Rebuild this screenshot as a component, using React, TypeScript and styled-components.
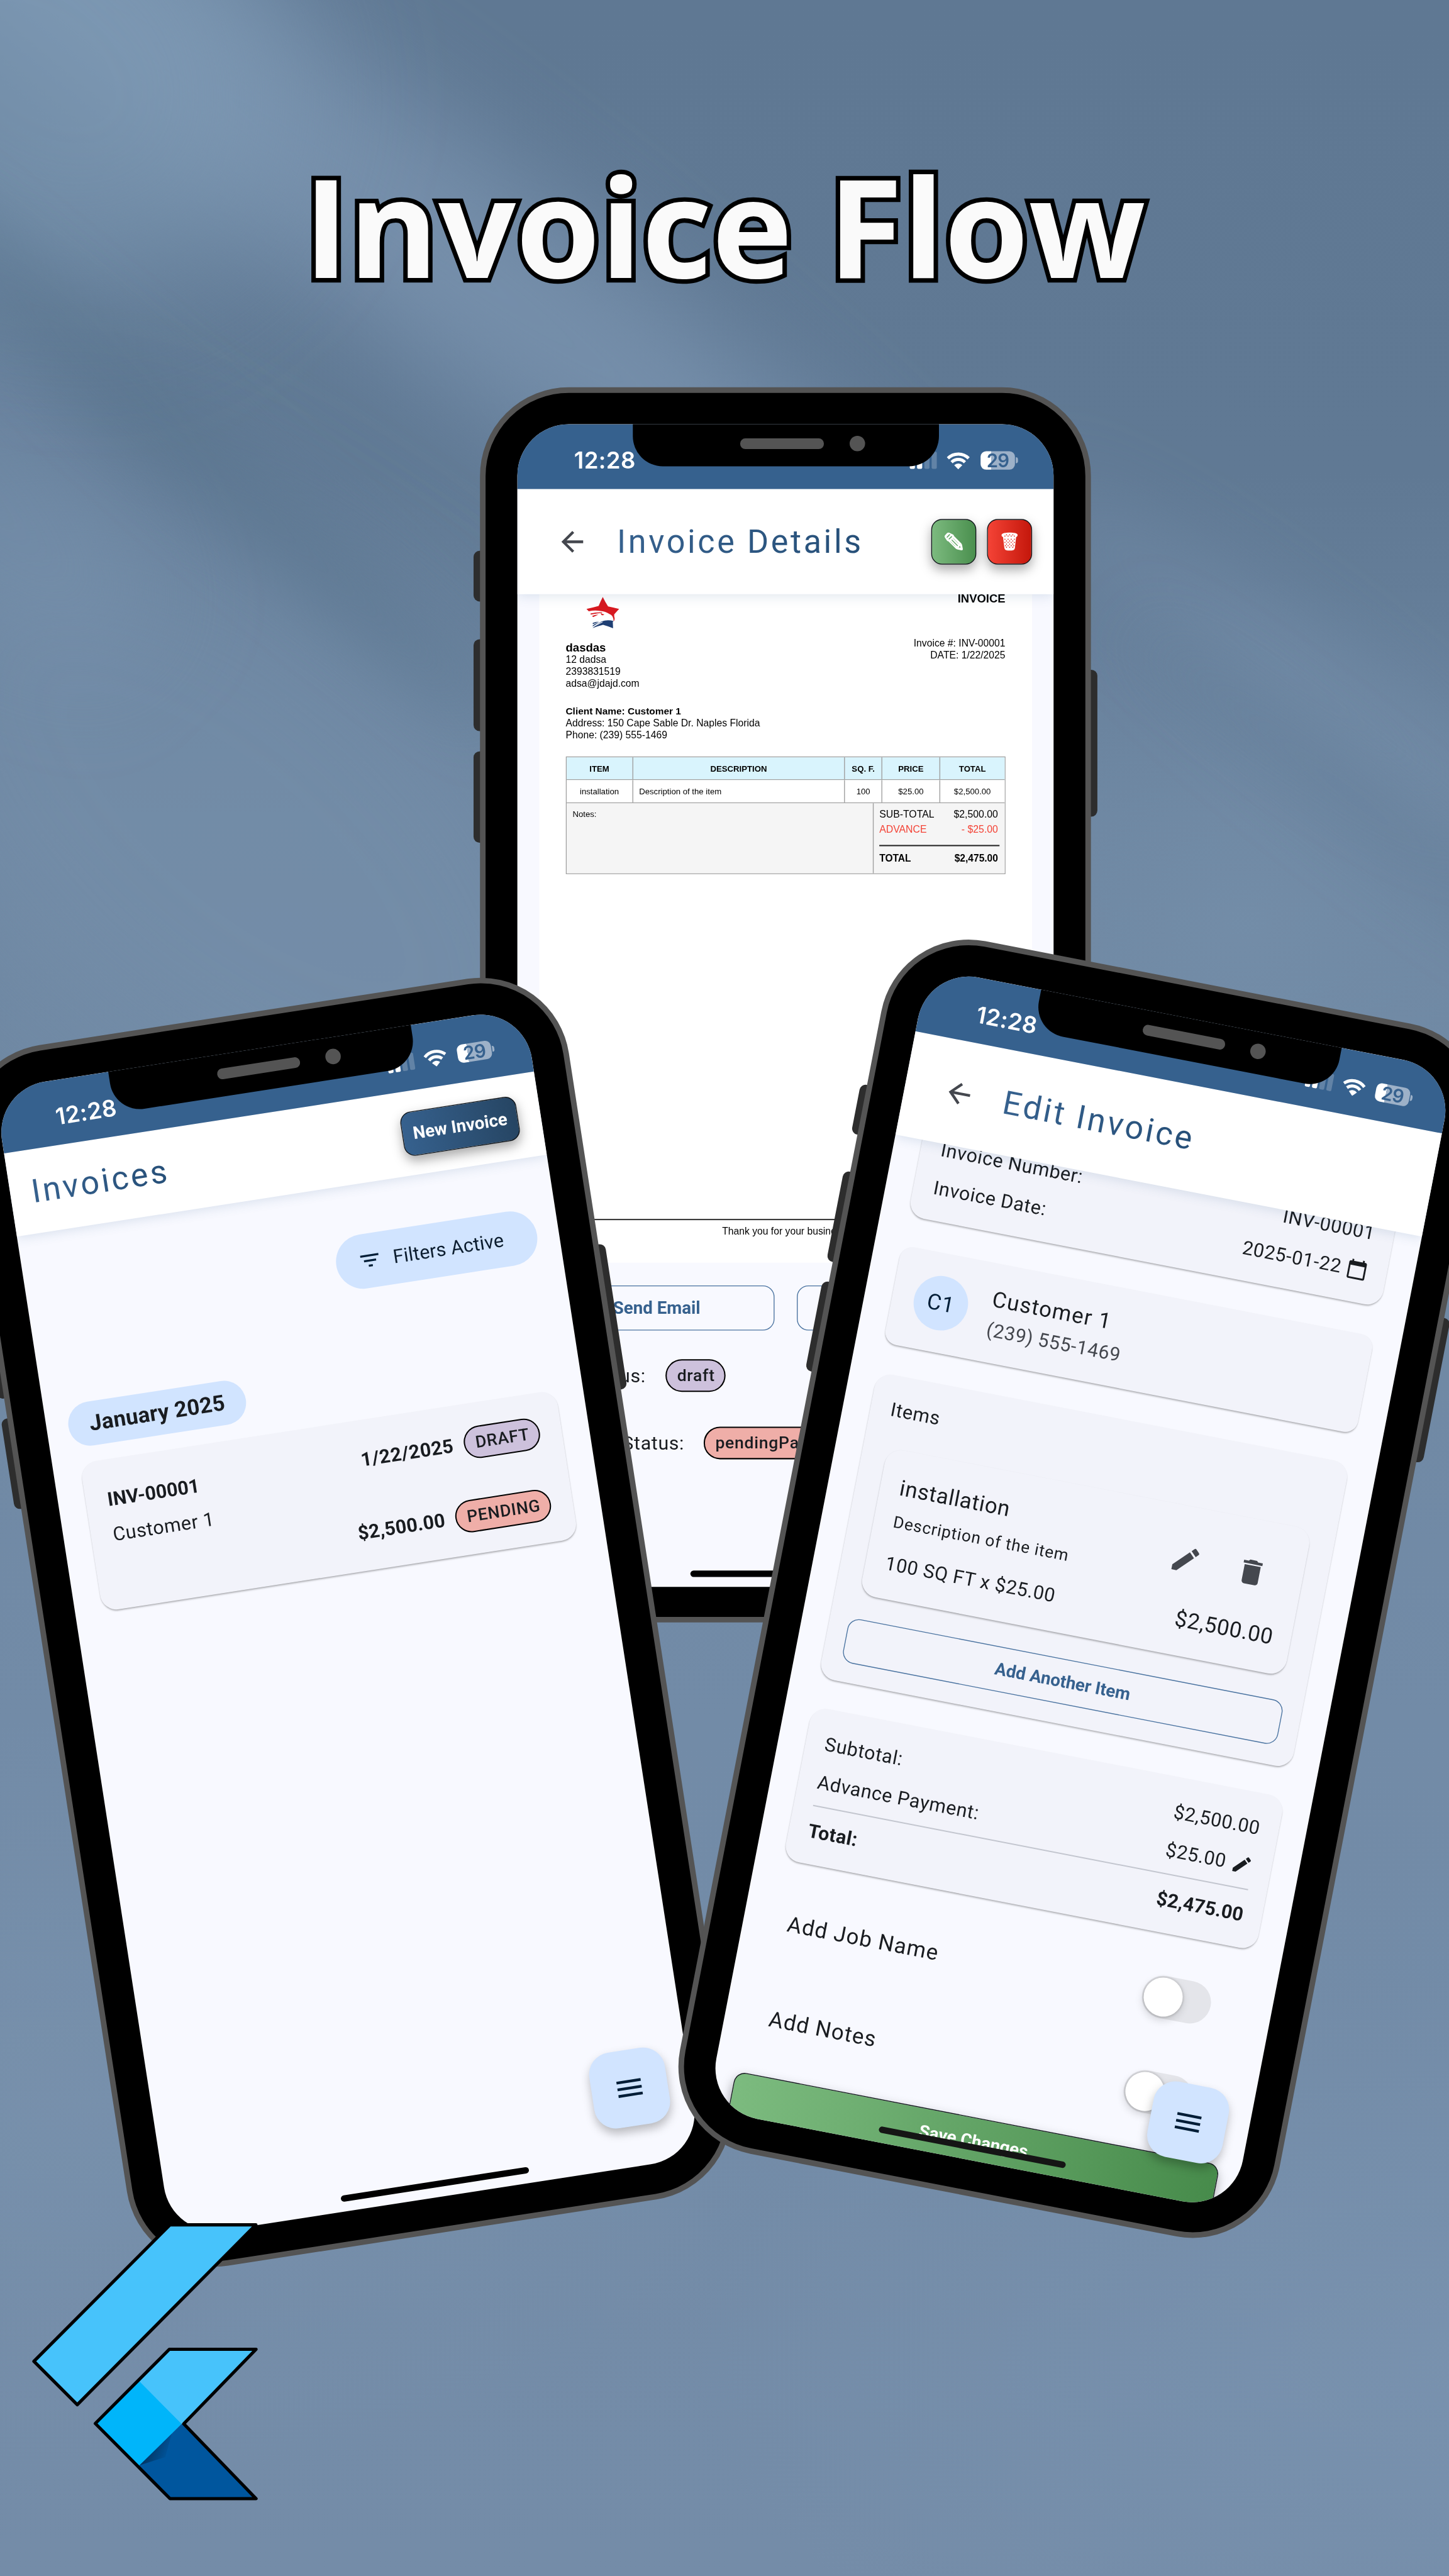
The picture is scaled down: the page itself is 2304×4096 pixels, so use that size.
import React from "react";
import styled, { createGlobalStyle, css } from "styled-components";

const GlobalStyle = createGlobalStyle`
  * { box-sizing: border-box; }
  html, body { margin: 0; padding: 0; background: #6f89a4; }
`;

const blue = "#36618e";
const ink = "#191c20";
const muted = "#44474e";
const roboto = `Roboto, "Noto Sans", sans-serif`;
const arial = `"Liberation Sans", Arial, sans-serif`;

/* ---------- poster ---------- */

const Viewport = styled.main`
  width: 2304px;
  height: 4096px;
  overflow: hidden;
  position: relative;
`;

const Poster = styled.div`
  position: relative;
  width: 3375px;
  height: 6000px;
  overflow: hidden;
  transform: scale(0.6826667);
  transform-origin: 0 0;
  background:
    radial-gradient(ellipse 1900px 900px at 3500px 5500px, rgba(124, 150, 179, 0.6), transparent),
    radial-gradient(ellipse 1600px 900px at 200px 4900px, rgba(122, 147, 174, 0.6), transparent),
    radial-gradient(ellipse 900px 800px at 2900px 2150px, rgba(119, 145, 172, 0.6), transparent),
    linear-gradient(180deg, #5f7893 0, #607994 1100px, #6b849f 1900px, #6e87a2 2400px, #728ba7 4000px, #748ca8 6000px);
`;

const Beam = styled.div<{ $x: number; $y: number; $w: number; $h: number; $angle: number; $color: string; $blur: number }>`
  position: absolute;
  left: ${(p) => p.$x}px;
  top: ${(p) => p.$y}px;
  width: ${(p) => p.$w}px;
  height: ${(p) => p.$h}px;
  background: ${(p) => p.$color};
  border-radius: 50%;
  filter: blur(${(p) => p.$blur}px);
  transform: rotate(${(p) => p.$angle}deg);
`;

const Headline = styled.h1`
  position: relative;
  margin: 0;
  padding-top: 308px;
  text-align: center;
  font: 700 317.5px/433px "Open Sans", "Noto Sans", sans-serif;
  color: #fafafa;
  white-space: nowrap;
  -webkit-text-stroke: 21px #000;
  paint-order: stroke fill;
`;

const FlutterMark = styled.svg`
  position: absolute;
  left: 60px;
  top: 5160px;
  width: 560px;
  height: 680px;
`;

/* ---------- phone ---------- */

const PhoneBody = styled.section<{ $cx: number; $cy: number; $angle: number }>`
  position: absolute;
  left: ${(p) => p.$cx - 711.5}px;
  top: ${(p) => p.$cy - 1440}px;
  width: 1423px;
  height: 2877px;
  transform: rotate(${(p) => p.$angle}deg);
  transform-origin: 711.5px 1440px;
`;

const SideKey = styled.div<{ $side: "left" | "right"; $top: number; $length: number }>`
  position: absolute;
  ${(p) => p.$side}: -15px;
  top: ${(p) => p.$top}px;
  width: 40px;
  height: ${(p) => p.$length}px;
  border-radius: 14px;
  background: #2d2d2d;
`;

const Shell = styled.div`
  position: relative;
  width: 100%;
  height: 100%;
  border: 13px solid #545454;
  border-radius: 207px;
  background: #000;
  padding: 73px 74px 70px;
`;

const Screen = styled.div`
  position: relative;
  width: 1249px;
  height: 2708px;
  border-radius: 120px;
  overflow: hidden;
  background: #f8f9ff;
  display: flex;
  flex-direction: column;
  font-family: ${roboto};
  color: ${ink};
  white-space: nowrap;
`;

const Notch = styled.div`
  position: absolute;
  z-index: 5;
  left: 269px;
  top: -2px;
  width: 713px;
  height: 100px;
  border-radius: 0 0 70px 70px;
  background: #000;
  display: flex;
  align-items: center;
  padding: 0 0 6px 250px;
  gap: 60px;
`;

const Speaker = styled.div`
  width: 195px;
  height: 25px;
  border-radius: 12px;
  background: #545454;
`;

const Camera = styled.div`
  width: 36px;
  height: 36px;
  border-radius: 50%;
  background: #545454;
`;

const HomeBar = styled.div<{ $color?: string }>`
  position: absolute;
  z-index: 6;
  left: 403px;
  bottom: 23px;
  width: 443px;
  height: 15px;
  border-radius: 8px;
  background: ${(p) => p.$color ?? "#000"};
`;

const StatusBar = styled.div`
  position: relative;
  z-index: 4;
  flex: none;
  height: 151px;
  padding: 17px 83px 0 132px;
  background: ${blue};
  display: flex;
  align-items: center;
  color: #fff;
`;

const Clock = styled.span`
  flex: 1;
  padding-top: 2px;
  font: 600 53.5px/60px Inter, sans-serif;
  letter-spacing: 0.6px;
`;

const Signal = styled.div`
  display: flex;
  align-items: flex-end;
  gap: 5px;
  height: 40px;
  margin-right: 23px;
`;

const SignalStep = styled.i<{ $h: number; $dim?: boolean }>`
  width: 12px;
  height: ${(p) => p.$h}px;
  border-radius: 3px;
  background: ${(p) => (p.$dim ? "rgba(255,255,255,0.22)" : "#fff")};
`;

const WifiGlyph = styled.svg`
  width: 54px;
  height: 41px;
  margin-right: 25px;
`;

const BatteryRow = styled.div`
  display: flex;
  align-items: center;
  gap: 2px;
`;

const Battery = styled.div`
  width: 80px;
  height: 43px;
  border-radius: 13px;
  background: linear-gradient(90deg, #fff 0 24px, #9db1c8 24px);
  color: ${blue};
  font: 600 43px/43px Inter, sans-serif;
  letter-spacing: -1px;
  text-align: center;
`;

const BatteryTip = styled.i`
  width: 5px;
  height: 14px;
  border-radius: 0 5px 5px 0;
  background: #9db1c8;
`;

const AppBar = styled.header<{ $height: number; $left: number }>`
  position: relative;
  z-index: 3;
  flex: none;
  height: ${(p) => p.$height}px;
  padding: 0 50px 0 ${(p) => p.$left}px;
  background: #fff;
  box-shadow: 0 4px 26px rgba(54, 97, 142, 0.16);
  display: flex;
  align-items: center;
`;

const BarTitle = styled.h2<{ $gap?: number }>`
  margin: 0 auto 0 ${(p) => p.$gap ?? 0}px;
  font-weight: 400;
  font-size: 76.3px;
  line-height: 100px;
  letter-spacing: 5.3px;
  background: linear-gradient(90deg, ${blue}, #264f78);
  background-clip: text;
  -webkit-background-clip: text;
  color: transparent;
`;

const Icon24 = styled.svg<{ $size: number; $color?: string }>`
  flex: none;
  width: ${(p) => p.$size}px;
  height: ${(p) => p.$size}px;
  fill: ${(p) => p.$color ?? ink};
`;

const raised = css`
  border: 2.5px solid #10151a;
  box-shadow: 0 12px 26px rgba(0, 0, 0, 0.34);
`;

const SquareAction = styled.div<{ $tone: string }>`
  ${raised}
  width: 105px;
  height: 106px;
  margin-left: 25px;
  border-radius: 25px;
  background: linear-gradient(90deg, ${(p) => p.$tone});
  display: flex;
  align-items: center;
  justify-content: center;
`;

const Fab = styled.div`
  position: absolute;
  z-index: 4;
  right: 53px;
  bottom: 94px;
  width: 178px;
  height: 178px;
  border-radius: 51px;
  background: #d1e4ff;
  box-shadow: 0 12px 22px rgba(0, 0, 0, 0.26);
  display: flex;
  align-items: center;
  justify-content: center;
`;

const Card = styled.div<{ $radius?: number }>`
  flex: none;
  background: #f2f3fa;
  border-radius: ${(p) => p.$radius ?? 38}px;
  box-shadow: 0 4px 4px -1px rgba(0, 0, 0, 0.25), 0 1px 3px rgba(0, 0, 0, 0.1);
`;

const Line = styled.div<{ $size?: number; $lh?: number; $track?: number; $bold?: boolean; $color?: string; $mt?: number }>`
  font-size: ${(p) => p.$size ?? 44.5}px;
  line-height: ${(p) => p.$lh ?? 64}px;
  letter-spacing: ${(p) => p.$track ?? 0.95}px;
  font-weight: ${(p) => (p.$bold ? 700 : 400)};
  color: ${(p) => p.$color ?? ink};
  margin-top: ${(p) => p.$mt ?? 0}px;
`;

const Badge = styled.span<{ $tone: "violet" | "coral" }>`
  height: 76px;
  padding: 0 22px 0 24px;
  border: 3.2px solid #000;
  border-radius: 38px;
  background: ${(p) => (p.$tone === "violet" ? "#cdc1dc" : "#efaea8")};
  font-weight: 500;
  font-size: 38.9px;
  line-height: 70px;
  letter-spacing: 1.1px;
`;

const Outlined = styled.div<{ $bleed?: boolean }>`
  flex: 1;
  height: 105px;
  margin: 0 ${(p) => (p.$bleed ? -2.5 : 0)}px;
  border: 2px solid #4a73a0;
  border-radius: 27px;
  color: ${blue};
  font-weight: 700;
  font-size: 40.5px;
  line-height: 101px;
  text-align: center;
`;

/* ---------- invoice details ---------- */

const Paper = styled.article`
  flex: none;
  height: 1556.5px;
  margin: 0 50.5px;
  padding: 0 62px 58px;
  background: #fff;
  display: flex;
  flex-direction: column;
  font-family: ${arial};
  font-size: 23px;
  line-height: 27.2px;
  color: #000;
`;

const Split = styled.div<{ $height?: number }>`
  display: flex;
  justify-content: space-between;
  align-items: flex-start;
  ${(p) => p.$height && `height: ${p.$height}px;`}
`;

const EagleStar = styled.svg`
  width: 130px;
  height: 86px;
  margin-left: 22px;
`;

const PaperTitle = styled.strong`
  font-size: 27px;
  line-height: 30px;
  margin-top: -4px;
`;

const Company = styled.div`
  padding-top: 8px;
  strong { display: block; font-size: 27.2px; line-height: 31px; }
`;

const RightLines = styled.div`
  padding-top: 1px;
  text-align: right;
`;

const Client = styled.div`
  strong { font-size: 22.6px; }
`;

const PaperTable = styled.div`
  margin-top: 37px;
  border: 2.5px solid #9e9e9e;
  font-size: 19.3px;
`;

const TableRow = styled.div<{ $head?: boolean }>`
  display: grid;
  grid-template-columns: 153px 493.6px 87.1px 134.9px 1fr;
  height: 53.3px;
  border-bottom: 2.5px solid #9e9e9e;
  background: ${(p) => (p.$head ? "#d9f4fd" : "#fff")};
  font-weight: ${(p) => (p.$head ? 700 : 400)};
`;

const Cell = styled.div<{ $start?: boolean }>`
  display: flex;
  align-items: center;
  justify-content: ${(p) => (p.$start ? "flex-start" : "center")};
  padding: ${(p) => (p.$start ? "1px 0 0 14px" : "1px 0 0")};
  & + & { border-left: 2.5px solid #9e9e9e; }
`;

const TotalsRow = styled.div`
  display: grid;
  grid-template-columns: 713.5px 1fr;
  height: 163px;
  background: #f5f5f5;
`;

const NotesCell = styled.div`
  padding: 12px 14px;
`;

const SumCell = styled.div`
  border-left: 2.5px solid #9e9e9e;
  padding: 12px 12px 0 13px;
  font-size: 23.2px;
  line-height: 29px;
`;

const SumLine = styled.div<{ $red?: boolean; $total?: boolean }>`
  display: flex;
  justify-content: space-between;
  padding-right: 3px;
  height: 35px;
  color: ${(p) => (p.$red ? "#f44336" : "#000")};
  ${(p) => p.$total && "border-top: 3px solid #222; margin-top: 15px; padding-top: 14px; font-weight: 700; font-size: 22.8px; height: auto;"}
`;

const PaperFooter = styled.footer`
  margin-top: auto;
  border-top: 3px solid #333;
  padding-top: 13px;
  text-align: center;
`;

const ButtonPair = styled.div`
  flex: none;
  display: flex;
  gap: 52px;
  margin: 53px 50.5px 0;
`;

const StatusRow = styled.div<{ $mt: number }>`
  flex: none;
  display: flex;
  align-items: center;
  gap: 46px;
  margin: ${(p) => p.$mt}px 0 0 51px;
`;

const StatusName = styled(Line)<{ $width: number }>`
  width: ${(p) => p.$width}px;
  text-align: right;
`;

/* ---------- invoice list ---------- */

const NewInvoice = styled.div`
  ${raised}
  width: 273px;
  height: 104px;
  margin: 4px 3px 0 0;
  border-radius: 26px;
  background: linear-gradient(90deg, ${blue}, #264563);
  color: #fff;
  font-weight: 700;
  font-size: 40.5px;
  line-height: 98px;
  text-align: center;
`;

const FilterChip = styled.div`
  flex: none;
  align-self: flex-end;
  margin: 117px 51px 0 0;
  width: 473px;
  height: 127px;
  border-radius: 64px;
  background: #d1e4ff;
  display: flex;
  align-items: center;
  gap: 26px;
  padding-left: 51px;
`;

const MonthChip = styled.div`
  flex: none;
  align-self: flex-start;
  margin: 161px 0 0 51px;
  width: 418px;
  height: 103px;
  border-radius: 52px;
  background: #d1e4ff;
  font-weight: 700;
  font-size: 50.9px;
  line-height: 102px;
  letter-spacing: 0.4px;
  text-align: center;
`;

const InvoiceCard = styled(Card)`
  margin: 37px 64px 0;
  height: 349px;
  padding: 54px 51px 0;
  display: flex;
  justify-content: space-between;
`;

const Amounts = styled.div`
  display: flex;
  flex-direction: column;
  align-items: flex-end;
  gap: 91.5px;
`;

const AmountRow = styled.div`
  display: flex;
  align-items: center;
  gap: 25px;
`;

/* ---------- edit invoice ---------- */

const EditBody = styled.div`
  flex: none;
  display: flex;
  flex-direction: column;
  padding: 0 64px;
  margin-top: -82px;
`;

const MetaCard = styled(Card)`
  height: 262px;
  padding: 51px 45px 0 47px;
`;

const Field = styled.div<{ $height: number }>`
  display: flex;
  justify-content: space-between;
  align-items: center;
  height: ${(p) => p.$height}px;
`;

const Value = styled.div`
  display: flex;
  align-items: center;
  gap: 12px;
`;

const CustomerCard = styled(Card)`
  margin-top: 70px;
  height: 231px;
  padding-left: 51px;
  display: flex;
  align-items: center;
  gap: 53px;
`;

const Avatar = styled.div`
  width: 127px;
  height: 127px;
  border-radius: 50%;
  background: #d1e4ff;
  color: #001d36;
  font-size: 50.9px;
  line-height: 127px;
  letter-spacing: 1px;
  text-align: center;
`;

const ItemsCard = styled(Card)`
  margin-top: 70px;
  height: 724px;
  padding: 47px 47px 0;
`;

const ItemCard = styled(Card)`
  margin: 57px 10px;
  height: 348px;
  padding: 48px 42px 0 46px;
  display: flex;
  justify-content: space-between;
`;

const ItemSide = styled.div`
  display: flex;
  flex-direction: column;
  align-items: flex-end;
`;

const ItemIcons = styled.div`
  display: flex;
  gap: 80px;
  height: 152px;
  align-items: center;
  padding-right: 40px;
`;

const SumCard = styled(Card)`
  margin-top: 69px;
  height: 363px;
  padding: 49px 44px 0 45px;
`;

const Divider = styled.div`
  height: 3px;
  margin: 22px 0 13px;
  background: #c3c6cf;
`;

const ToggleList = styled.div`
  padding: 34px 78px 0 39px;
`;

const ToggleRow = styled.div`
  display: flex;
  align-items: center;
  justify-content: space-between;
  height: 224.6px;
`;

const Switch = styled.div`
  width: 162px;
  height: 99px;
  border-radius: 50px;
  background: #e4e5ea;
  padding: 4px;
`;

const Thumb = styled.div`
  width: 91px;
  height: 91px;
  border-radius: 50%;
  background: #fff;
  box-shadow: 0 8px 20px rgba(0, 0, 0, 0.16), 0 0 4px 3px rgba(0, 0, 0, 0.1);
`;

const SaveButton = styled.div`
  ${raised}
  height: 160px;
  margin: 22px -14px 0;
  border-radius: 26px;
  background: linear-gradient(90deg, #7cbb7f, #478b4b);
  color: #fff;
  font-weight: 700;
  font-size: 40.5px;
  line-height: 106px;
  text-align: center;
`;

/* ---------- drawings ---------- */

const MENU = "M3 18h18v-2H3v2zm0-5h18v-2H3v2zm0-7v2h18V6H3z";
const BACK = "M20 11H7.83l5.59-5.59L12 4l-8 8 8 8 1.41-1.41L7.83 13H20v-2z";
const FILTER = "M10 18h4v-2h-4v2zM3 6v2h18V6H3zm3 7h12v-2H6v2z";
const EDIT = "M3 17.25V21h3.75L17.81 9.94l-3.75-3.75L3 17.25zM20.71 7.04a1 1 0 0 0 0-1.41l-2.34-2.34a1 1 0 0 0-1.41 0l-1.83 1.83 3.75 3.75 1.83-1.83z";
const TRASH = "M6 19c0 1.1.9 2 2 2h8c1.100 0 2-.9 2-2V7H6v12zM19 4h-3.500l-1-1h-5l-1 1H5v2h14V4z";
const CALENDAR = "M20 3h-1V1h-2v2H7V1H5v2H4c-1.100 0-2 .9-2 2v16c0 1.100.9 2 2 2h16c1.100 0 2-.9 2-2V5c0-1.100-.9-2-2-2zm0 18H4V8h16v13z";

const Glyph = ({ d, size, color }: { d: string; size: number; color?: string }) => (
  <Icon24 $size={size} $color={color} viewBox="0 0 24 24"><path d={d} /></Icon24>
);

const PencilArt = () => (
  <svg width="43" height="43" viewBox="0 0 129 129">
    <path d="M3 36Q-4 27 6 17L17 6Q27-3 37 4L58 14Q66 18 66 25L116 76Q121 81 123 90L128 116Q129 127 117 125L92 120Q84 118 78 113L27 63Q18 62 15 55Z" fill="#fff" />
    <g stroke="#5fa563" fill="none" strokeLinecap="round">
      <path d="M18 34L35 16" strokeWidth="7" />
      <path d="M32 46L49 30" strokeWidth="7" />
      <path d="M52 54L90 92" strokeWidth="6" />
      <path d="M42 64L74 96" strokeWidth="2.500" />
      <path d="M62 43L96 77" strokeWidth="2.500" />
    </g>
    <path d="M99 105L107 95L113 107Z" fill="#5fa563" />
  </svg>
);

const BasketArt = () => (
  <svg width="39" height="43" viewBox="0 0 117 129">
    <path d="M2 17Q6 4 34 3Q58-2 84 3Q112 4 115 17Q116 26 104 34L96 108Q94 126 72 127H46Q24 126 22 108L13 34Q0 26 2 17Z" fill="#fff" />
    <g fill="#e0281d">
      {[[26, 26], [48, 26], [70, 26], [92, 26], [37, 17], [59, 17], [81, 17], [26, 48], [48, 48], [70, 48], [92, 48], [37, 60], [59, 60], [81, 60], [26, 70], [48, 70], [70, 70], [92, 70], [37, 82], [59, 82], [81, 82], [48, 93], [70, 93], [88, 93], [30, 93], [37, 104], [59, 104], [81, 104]].map(([x, y]) => (
        <circle key={`${x}-${y}`} cx={x} cy={y} r="3.700" />
      ))}
    </g>
  </svg>
);

const Eagle = () => (
  <EagleStar viewBox="0 12 390 258">
    <path d="M192 32Q178 58 163 94Q120 106 78 115L94 131Q135 122 175 129Q212 132 238 150Q262 160 266 184L268 202Q276 192 275 180Q270 168 272 152L306 115Q262 104 229 97Q208 66 192 32Z" fill="#d71920" />
    <path d="M106 147Q140 138 184 138L190 143Q150 146 108 155ZM118 163Q140 155 162 155L124 172ZM178 143Q186 154 203 152Q196 162 184 158Q178 152 178 143Z" fill="#d71920" />
    <path d="M120 249Q150 222 182 203Q225 186 268 200L262 205L264 250Q230 236 194 226Q160 234 120 249ZM122 213Q142 204 164 204L122 222ZM122 230Q140 216 168 206L122 238Z" fill="#1f3f73" />
    <path d="M122 238L188 204L192 207L126 241Z" fill="#fff" />
  </EagleStar>
);

/* ---------- phone parts ---------- */

const Status = () => (
  <StatusBar>
    <Clock>12:28</Clock>
    <Signal>
      <SignalStep $h={14} />
      <SignalStep $h={21} />
      <SignalStep $h={31} $dim />
      <SignalStep $h={40} $dim />
    </Signal>
    <WifiGlyph viewBox="0 0 54 41">
      <g fill="none" stroke="#fff" strokeWidth="7.200">
        <path d="M2.800 15.500A34.500 34.500 0 0 1 51.200 15.500" />
        <path d="M11.500 24.500A22 22 0 0 1 42.500 24.500" />
      </g>
      <path d="M17.500 31.500A13.500 13.500 0 0 1 36.500 31.500L27 41Z" fill="#fff" />
    </WifiGlyph>
    <BatteryRow>
      <Battery>29</Battery>
      <BatteryTip />
    </BatteryRow>
  </StatusBar>
);

const Phone = ({ cx, cy, angle, homeColor, children }: { cx: number; cy: number; angle: number; homeColor?: string; children: React.ReactNode }) => (
  <PhoneBody $cx={cx} $cy={cy} $angle={angle}>
    <SideKey $side="left" $top={381} $length={118} />
    <SideKey $side="left" $top={587} $length={214} />
    <SideKey $side="left" $top={848} $length={213} />
    <SideKey $side="right" $top={658} $length={342} />
    <Shell>
      <Screen>
        <Notch><Speaker /><Camera /></Notch>
        <Status />
        {children}
        <HomeBar $color={homeColor} />
      </Screen>
    </Shell>
  </PhoneBody>
);

/* ---------- screens ---------- */

const DetailsScreen = () => (
  <>
    <AppBar $height={245} $left={90}>
      <Glyph d={BACK} size={76} color={muted} />
      <BarTitle $gap={66}>Invoice Details</BarTitle>
      <SquareAction $tone="#7cba7f, #4a8f4e"><PencilArt /></SquareAction>
      <SquareAction $tone="#f44336, #c4170b"><BasketArt /></SquareAction>
    </AppBar>
    <Paper>
      <Split $height={100.400}>
        <Eagle />
        <PaperTitle>INVOICE</PaperTitle>
      </Split>
      <Split $height={159}>
        <Company>
          <strong>dasdas</strong>
          12 dadsa<br />2393831519<br />adsa@jdajd.com
        </Company>
        <RightLines>Invoice #: INV-00001<br />DATE: 1/22/2025</RightLines>
      </Split>
      <Client>
        <strong>Client Name: Customer 1</strong><br />
        Address: 150 Cape Sable Dr. Naples Florida<br />
        Phone: (239) 555-1469
      </Client>
      <PaperTable>
        <TableRow $head>
          <Cell>ITEM</Cell><Cell>DESCRIPTION</Cell><Cell>SQ. F.</Cell><Cell>PRICE</Cell><Cell>TOTAL</Cell>
        </TableRow>
        <TableRow>
          <Cell>installation</Cell><Cell $start>Description of the item</Cell><Cell>100</Cell><Cell>$25.00</Cell><Cell>$2,500.00</Cell>
        </TableRow>
        <TotalsRow>
          <NotesCell>Notes:</NotesCell>
          <SumCell>
            <SumLine><span>SUB-TOTAL</span><span>$2,500.00</span></SumLine>
            <SumLine $red><span>ADVANCE</span><span>- $25.00</span></SumLine>
            <SumLine $total><span>TOTAL</span><span>$2,475.00</span></SumLine>
          </SumCell>
        </TotalsRow>
      </PaperTable>
      <PaperFooter>Thank you for your business!</PaperFooter>
    </Paper>
    <ButtonPair>
      <Outlined>Send Email</Outlined>
      <Outlined>Download</Outlined>
    </ButtonPair>
    <StatusRow $mt={67}>
      <StatusName $width={248}>Job Status:</StatusName>
      <Badge $tone="violet">draft</Badge>
    </StatusRow>
    <StatusRow $mt={81}>
      <StatusName $width={337}>Payment Status:</StatusName>
      <Badge $tone="coral">pendingPayment</Badge>
    </StatusRow>
  </>
);

const ListScreen = () => (
  <>
    <AppBar $height={196} $left={50}>
      <BarTitle>Invoices</BarTitle>
      <NewInvoice>New Invoice</NewInvoice>
    </AppBar>
    <FilterChip>
      <Glyph d={FILTER} size={57} color="#001d36" />
      <Line $track={0.3} $color="#0c1d2f">Filters Active</Line>
    </FilterChip>
    <MonthChip>January 2025</MonthChip>
    <InvoiceCard>
      <div>
        <Line $bold $lh={82} $track={0} $mt={-2}>INV-00001</Line>
        <Line $lh={82} $track={0.9}>Customer 1</Line>
      </div>
      <Amounts>
        <AmountRow><Line $bold $track={0.7}>1/22/2025</Line><Badge $tone="violet">DRAFT</Badge></AmountRow>
        <AmountRow><Line $bold $track={0.3}>$2,500.00</Line><Badge $tone="coral">PENDING</Badge></AmountRow>
      </Amounts>
    </InvoiceCard>
    <Fab><Glyph d={MENU} size={76} color="#001d36" /></Fab>
  </>
);

const EditScreen = () => (
  <>
    <AppBar $height={245} $left={90}>
      <Glyph d={BACK} size={76} color={muted} />
      <BarTitle $gap={66}>Edit Invoice</BarTitle>
    </AppBar>
    <EditBody>
      <MetaCard>
        <Field $height={90}><Line>Invoice Number:</Line><Line>INV-00001</Line></Field>
        <Field $height={90}>
          <Line>Invoice Date:</Line>
          <Value><Line>2025-01-22</Line><Glyph d={CALENDAR} size={50} /></Value>
        </Field>
      </MetaCard>
      <CustomerCard $radius={30}>
        <Avatar>C1</Avatar>
        <div>
          <Line $size={50.9} $lh={74} $track={1.9} $mt={5}>Customer 1</Line>
          <Line $lh={70} $color={muted}>(239) 555-1469</Line>
        </div>
      </CustomerCard>
      <ItemsCard>
        <Line>Items</Line>
        <ItemCard>
          <div>
            <Line $size={50.9} $lh={76} $mt={1}>installation</Line>
            <Line $size={38.1} $lh={56} $track={1.35} $mt={14}>Description of the item</Line>
            <Line $lh={76} $mt={32}>100 SQ FT x $25.00</Line>
          </div>
          <ItemSide>
            <ItemIcons>
              <Glyph d={EDIT} size={76} color={muted} />
              <Glyph d={TRASH} size={76} color={muted} />
            </ItemIcons>
            <Line $size={50.9} $lh={76} $mt={25}>$2,500.00</Line>
          </ItemSide>
        </ItemCard>
        <Outlined $bleed>Add Another Item</Outlined>
      </ItemsCard>
      <SumCard>
        <Field $height={64}><Line>Subtotal:</Line><Line>$2,500.00</Line></Field>
        <Field $height={26} />
        <Field $height={64}>
          <Line>Advance Payment:</Line>
          <Value><Line>$25.00</Line><Glyph d={EDIT} size={51} /></Value>
        </Field>
        <Divider />
        <Field $height={90}><Line $bold $track={0.8}>Total:</Line><Line $bold $track={0.3}>$2,475.00</Line></Field>
      </SumCard>
      <ToggleList>
        <ToggleRow><Line $size={50.9} $track={1.8}>Add Job Name</Line><Switch><Thumb /></Switch></ToggleRow>
        <ToggleRow><Line $size={50.9} $track={1.8}>Add Notes</Line><Switch><Thumb /></Switch></ToggleRow>
      </ToggleList>
      <SaveButton>Save Changes</SaveButton>
    </EditBody>
    <Fab><Glyph d={MENU} size={76} color="#001d36" /></Fab>
  </>
);

export default function App() {
  return (
    <Viewport>
      <GlobalStyle />
      <Poster>
        <Beam $x={-500} $y={1350} $w={2100} $h={1200} $angle={40} $color="rgba(120,146,173,0.55)" $blur={180} />
        <Beam $x={-700} $y={850} $w={1200} $h={500} $angle={45} $color="rgba(120,146,173,0.5)" $blur={110} />
        <Beam $x={-900} $y={220} $w={3500} $h={470} $angle={36} $color="rgba(124,149,177,0.75)" $blur={120} />
        <Beam $x={-500} $y={-350} $w={1200} $h={1000} $angle={36} $color="rgba(128,156,184,0.6)" $blur={160} />
        <Beam $x={-600} $y={930} $w={2000} $h={150} $angle={42} $color="rgba(88,114,141,0.55)" $blur={75} />
        <Beam $x={2300} $y={1430} $w={1300} $h={200} $angle={36} $color="rgba(122,147,174,0.4)" $blur={90} />
        <Beam $x={2500} $y={1800} $w={1300} $h={110} $angle={38} $color="rgba(90,116,143,0.4)" $blur={80} />
        <Headline>Invoice Flow</Headline>
        <Phone cx={1829.6} cy={2342} angle={0}><DetailsScreen /></Phone>
        <Phone cx={810.1} cy={3780} angle={-8.8}><ListScreen /></Phone>
        <Phone cx={2516.9} cy={3702.4} angle={10.97} homeColor="#151515"><EditScreen /></Phone>
        <FlutterMark viewBox="60 5160 560 680">
          <defs>
            <linearGradient id="fold" gradientUnits="userSpaceOnUse" x1="340" y1="5700" x2="392" y2="5722">
              <stop offset="0" stopColor="#03315c" />
              <stop offset="1" stopColor="#00569e" />
            </linearGradient>
          </defs>
          <path d="M395.900 5182L596 5182L180 5601L79 5500Z" fill="#47c3fb" stroke="#000" strokeWidth="7.500" strokeLinejoin="round" />
          <path d="M394.400 5472H596.400L423 5645.900L319 5548Z" fill="#47c3fb" />
          <path d="M324 5546L423 5645.900L325 5744L222 5644.700Z" fill="#00b5fa" />
          <path d="M423 5645.900H428L596.400 5819.800H396L323 5744Z" fill="#00569e" />
          <path d="M325 5742.300L400 5669L385 5723Z" fill="url(#fold)" />
          <path d="M394.400 5472H596.400L428 5645.500L596.400 5819.800H396L222 5644.700Z" fill="none" stroke="#000" strokeWidth="7.500" strokeLinejoin="round" />
        </FlutterMark>
      </Poster>
    </Viewport>
  );
}
